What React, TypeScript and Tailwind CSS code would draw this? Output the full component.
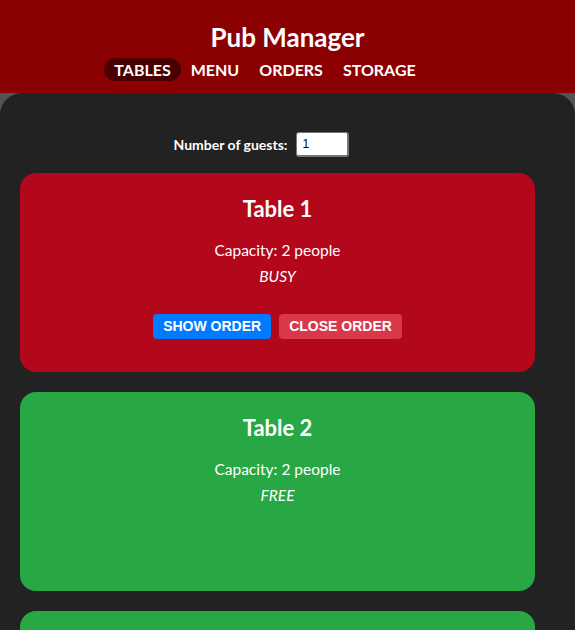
import React, { useState } from "react";

interface TableCardProps {
  name: string;
  capacity: number;
  busy: boolean;
}

const TableCard: React.FC<TableCardProps> = ({ name, capacity, busy }) => {
  return (
    <div
      className={`w-[515px] h-[199px] rounded-[16px] pt-[22px] flex flex-col items-center text-white ${
        busy ? "bg-[#b3071b]" : "bg-[#28a745]"
      }`}
    >
      <h2 className="text-[22px] leading-[28px] font-bold">{name}</h2>
      <p className="mt-[15px] text-[15.5px] leading-[24px]">Capacity: {capacity} people</p>
      <p className="mt-[2px] text-[15.5px] leading-[24px] italic">{busy ? "BUSY" : "FREE"}</p>
      {busy && (
        <div className="mt-[26px] flex gap-[8px] font-['Liberation_Sans',Arial,sans-serif]">
          <button className="h-[25px] px-[10px] rounded-[4px] bg-[#007bff] text-[14px] font-bold text-white">
            SHOW ORDER
          </button>
          <button className="h-[25px] px-[10px] rounded-[4px] bg-[#d9384a] text-[14px] font-bold text-white">
            CLOSE ORDER
          </button>
        </div>
      )}
    </div>
  );
};

const App: React.FC = () => {
  const [guests, setGuests] = useState("1");
  const navItems = ["TABLES", "MENU", "ORDERS", "STORAGE"];

  const tables = [
    { name: "Table 1", capacity: 2, busy: true },
    { name: "Table 2", capacity: 2, busy: false },
  ];

  return (
    <div className="min-h-screen bg-[#535353] font-['Lato',sans-serif]">
      <header className="h-[93px] bg-[#8b0000] pt-[20px] text-white">
        <h1 className="text-center text-[26px] leading-[34px] font-bold">Pub Manager</h1>
        <nav className="mt-[4px] flex justify-center pr-[45px]">
          {navItems.map((item, i) => (
            <a
              key={item}
              className={`h-[23px] px-[10px] rounded-full text-[16px] leading-[23px] font-bold ${
                i === 0 ? "bg-[#4a0000]" : ""
              }`}
            >
              {item}
            </a>
          ))}
        </nav>
      </header>

      <main className="bg-[#222222] rounded-t-[22px] pt-[39px] h-[537px] overflow-hidden">
        <div className="flex items-center justify-center gap-[9px] pr-[52px]">
          <label className="text-white text-[14px] font-bold">Number of guests:</label>
          <input
            value={guests}
            onChange={(e) => setGuests(e.target.value)}
            className="w-[53px] h-[25px] bg-white rounded-[3px] border border-[#777] border-r-[2px] border-b-[2px] px-[5px] text-[12px] font-['Liberation_Sans',Arial,sans-serif] text-black"
          />
        </div>

        <div className="mt-[16px] pl-[20px] flex flex-col gap-[20px]">
          {tables.map((t) => (
            <TableCard key={t.name} name={t.name} capacity={t.capacity} busy={t.busy} />
          ))}
          <div className="w-[515px] h-[199px] rounded-[16px] bg-[#28a745]" />
        </div>
      </main>
    </div>
  );
};

export default App;
